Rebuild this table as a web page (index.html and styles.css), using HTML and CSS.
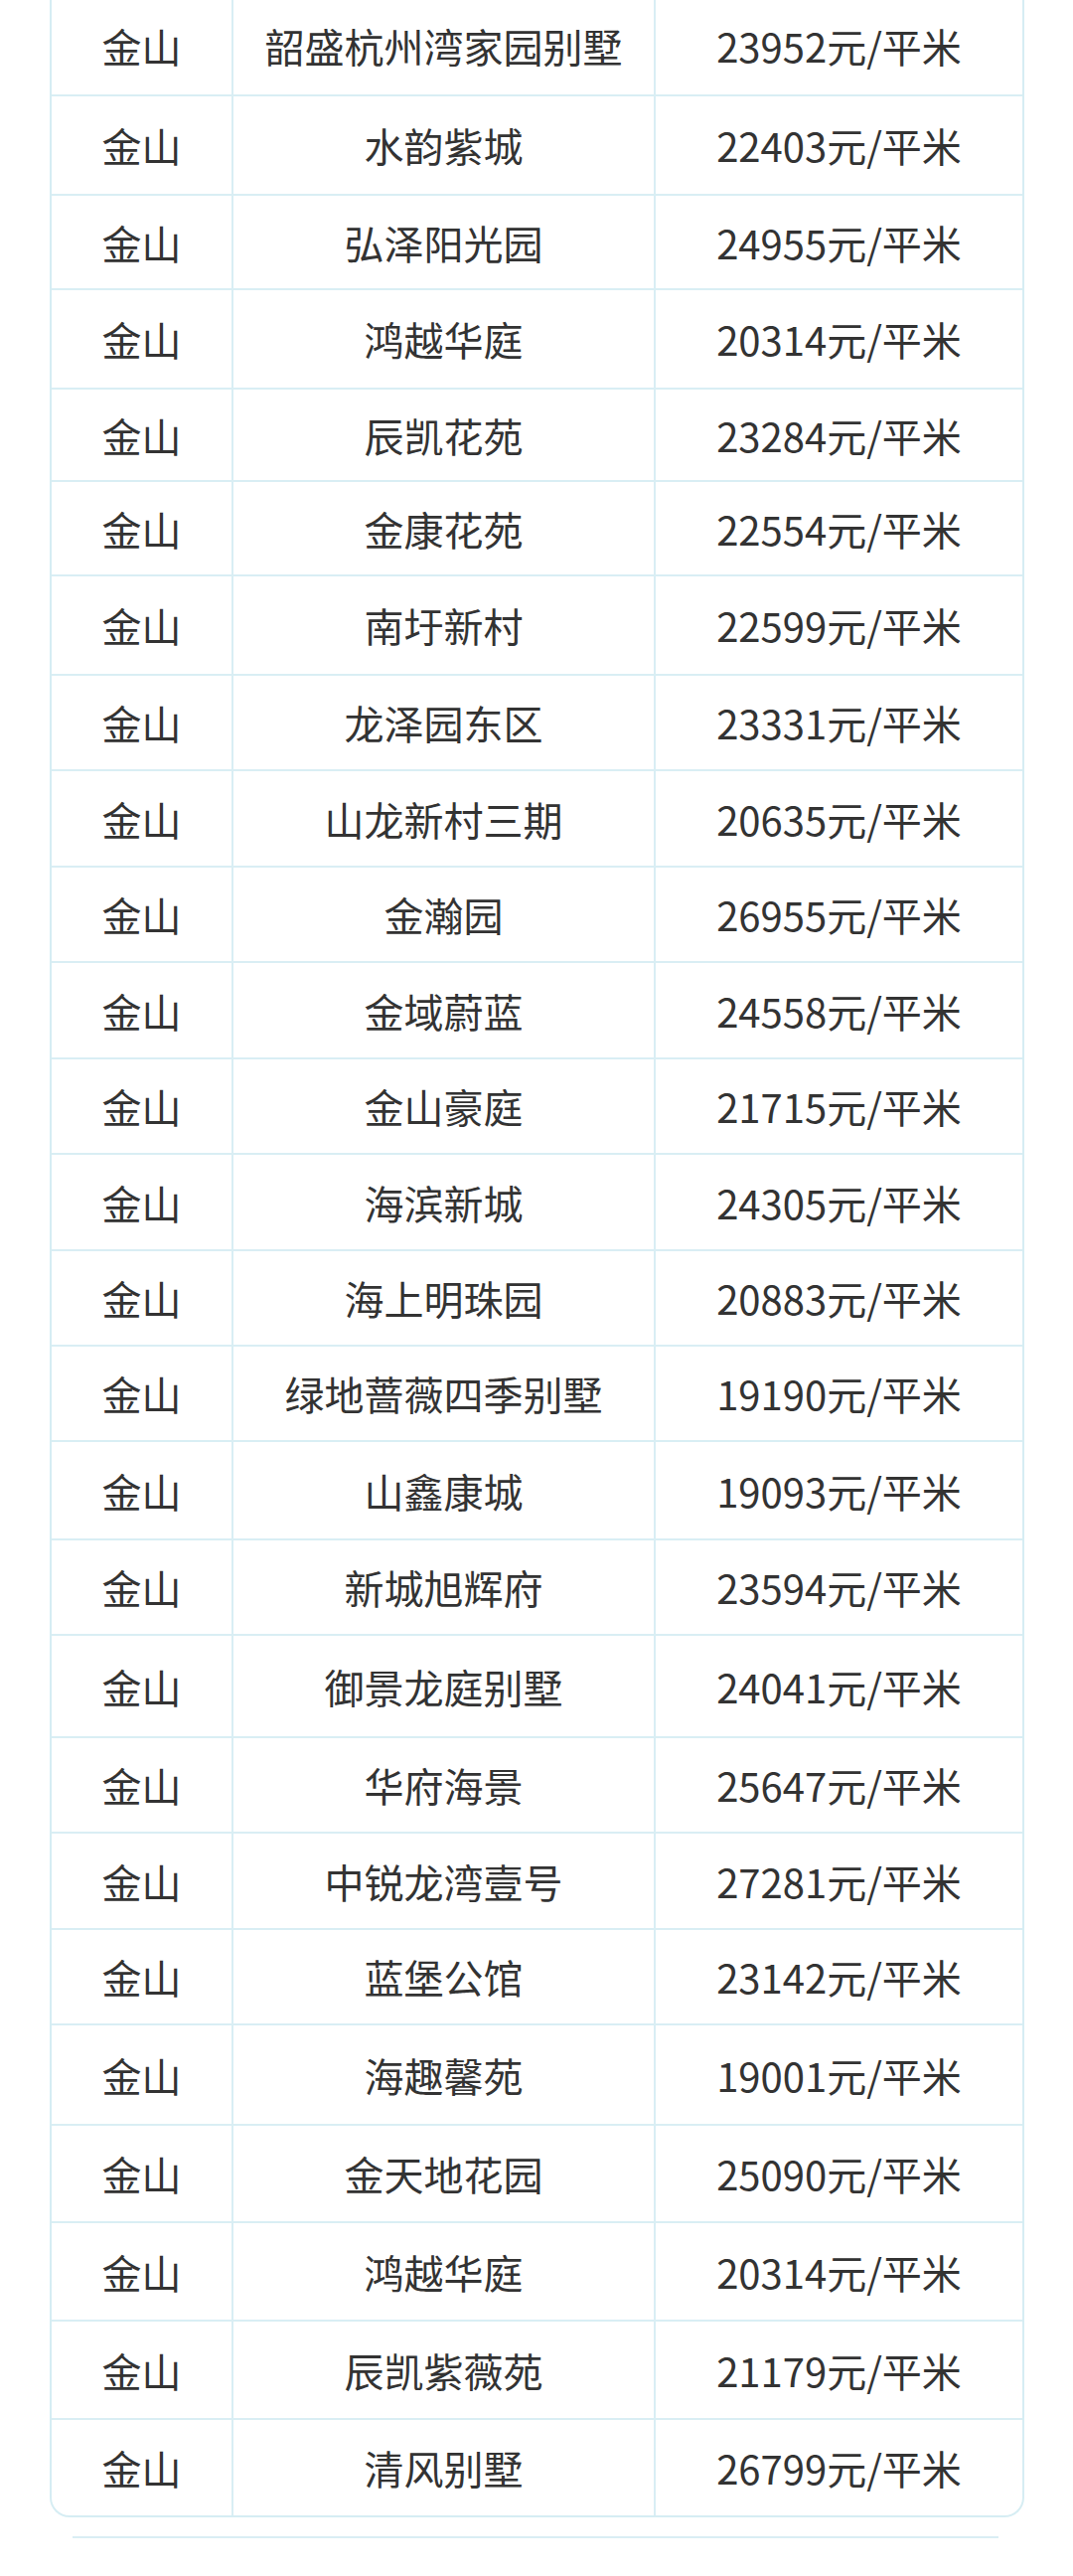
FILE: index.html
```html
<!DOCTYPE html>
<html lang="zh-CN">
<head>
<meta charset="utf-8">
<title>金山房价</title>
<link rel="stylesheet" href="styles.css">
</head>
<body>
<div class="page">
  <div class="table">
    <div class="row"><div class="cell c1">金山</div><div class="cell c2">韶盛杭州湾家园别墅</div><div class="cell c3">23952元/平米</div></div>
    <div class="row"><div class="cell c1">金山</div><div class="cell c2">水韵紫城</div><div class="cell c3">22403元/平米</div></div>
    <div class="row"><div class="cell c1">金山</div><div class="cell c2">弘泽阳光园</div><div class="cell c3">24955元/平米</div></div>
    <div class="row"><div class="cell c1">金山</div><div class="cell c2">鸿越华庭</div><div class="cell c3">20314元/平米</div></div>
    <div class="row"><div class="cell c1">金山</div><div class="cell c2">辰凯花苑</div><div class="cell c3">23284元/平米</div></div>
    <div class="row"><div class="cell c1">金山</div><div class="cell c2">金康花苑</div><div class="cell c3">22554元/平米</div></div>
    <div class="row"><div class="cell c1">金山</div><div class="cell c2">南圩新村</div><div class="cell c3">22599元/平米</div></div>
    <div class="row"><div class="cell c1">金山</div><div class="cell c2">龙泽园东区</div><div class="cell c3">23331元/平米</div></div>
    <div class="row"><div class="cell c1">金山</div><div class="cell c2">山龙新村三期</div><div class="cell c3">20635元/平米</div></div>
    <div class="row"><div class="cell c1">金山</div><div class="cell c2">金瀚园</div><div class="cell c3">26955元/平米</div></div>
    <div class="row"><div class="cell c1">金山</div><div class="cell c2">金域蔚蓝</div><div class="cell c3">24558元/平米</div></div>
    <div class="row"><div class="cell c1">金山</div><div class="cell c2">金山豪庭</div><div class="cell c3">21715元/平米</div></div>
    <div class="row"><div class="cell c1">金山</div><div class="cell c2">海滨新城</div><div class="cell c3">24305元/平米</div></div>
    <div class="row"><div class="cell c1">金山</div><div class="cell c2">海上明珠园</div><div class="cell c3">20883元/平米</div></div>
    <div class="row"><div class="cell c1">金山</div><div class="cell c2">绿地蔷薇四季别墅</div><div class="cell c3">19190元/平米</div></div>
    <div class="row"><div class="cell c1">金山</div><div class="cell c2">山鑫康城</div><div class="cell c3">19093元/平米</div></div>
    <div class="row"><div class="cell c1">金山</div><div class="cell c2">新城旭辉府</div><div class="cell c3">23594元/平米</div></div>
    <div class="row"><div class="cell c1">金山</div><div class="cell c2">御景龙庭别墅</div><div class="cell c3">24041元/平米</div></div>
    <div class="row"><div class="cell c1">金山</div><div class="cell c2">华府海景</div><div class="cell c3">25647元/平米</div></div>
    <div class="row"><div class="cell c1">金山</div><div class="cell c2">中锐龙湾壹号</div><div class="cell c3">27281元/平米</div></div>
    <div class="row"><div class="cell c1">金山</div><div class="cell c2">蓝堡公馆</div><div class="cell c3">23142元/平米</div></div>
    <div class="row"><div class="cell c1">金山</div><div class="cell c2">海趣馨苑</div><div class="cell c3">19001元/平米</div></div>
    <div class="row"><div class="cell c1">金山</div><div class="cell c2">金天地花园</div><div class="cell c3">25090元/平米</div></div>
    <div class="row"><div class="cell c1">金山</div><div class="cell c2">鸿越华庭</div><div class="cell c3">20314元/平米</div></div>
    <div class="row"><div class="cell c1">金山</div><div class="cell c2">辰凯紫薇苑</div><div class="cell c3">21179元/平米</div></div>
    <div class="row"><div class="cell c1">金山</div><div class="cell c2">清风别墅</div><div class="cell c3">26799元/平米</div></div>
  </div>
  <div class="divider"></div>
</div>
</body>
</html>
```

FILE: styles.css
```css
html, body {
  margin: 0;
  padding: 0;
  background: #ffffff;
}

.page {
  width: 1080px;
  height: 2592px;
  overflow: hidden;
  font-family: "Noto Sans CJK SC", "Noto Sans", sans-serif;
  color: #333333;
}

.table {
  margin: -4px 0 0 50px;
  width: 981px;
  box-sizing: border-box;
  border-left: 2px solid #d6edf3;
  border-right: 2px solid #d6edf3;
  border-bottom: 2px solid #d6edf3;
  border-radius: 0 0 20px 20px;
  overflow: hidden;
}

.row {
  display: flex;
  height: 97px;
  box-sizing: border-box;
  border-bottom: 2px solid #d9eef4;
}

/* measured row heights (border included) */
.row:nth-child(1)  { height: 101px; }
.row:nth-child(2)  { height: 100px; }
.row:nth-child(3)  { height: 95px; }
.row:nth-child(4)  { height: 100px; }
.row:nth-child(5)  { height: 93px; }
.row:nth-child(6)  { height: 95px; }
.row:nth-child(7)  { height: 100px; }
.row:nth-child(8)  { height: 96px; }
.row:nth-child(9)  { height: 97px; }
.row:nth-child(10) { height: 96px; }
.row:nth-child(11) { height: 97px; }
.row:nth-child(12) { height: 96px; }
.row:nth-child(13) { height: 97px; }
.row:nth-child(14) { height: 96px; }
.row:nth-child(15) { height: 96px; }
.row:nth-child(16) { height: 99px; }
.row:nth-child(17) { height: 96px; }
.row:nth-child(18) { height: 103px; }
.row:nth-child(19) { height: 96px; }
.row:nth-child(20) { height: 97px; }
.row:nth-child(21) { height: 96px; }
.row:nth-child(22) { height: 101px; }
.row:nth-child(23) { height: 98px; }
.row:nth-child(24) { height: 99px; }
.row:nth-child(25) { height: 99px; }

.row:last-child {
  border-bottom: none;
  height: 96px;
}

.cell {
  display: flex;
  align-items: center;
  justify-content: center;
  font-size: 40px;
  line-height: 1;
  box-sizing: border-box;
}

.c1 {
  width: 183px;
  border-right: 2px solid #d9eef4;
}

.c2 {
  width: 425px;
  border-right: 2px solid #d9eef4;
}

.c3 {
  flex: 1;
}

.divider {
  margin: 19px 0 0 73px;
  width: 932px;
  height: 2px;
  background: #d9eef4;
}
```
